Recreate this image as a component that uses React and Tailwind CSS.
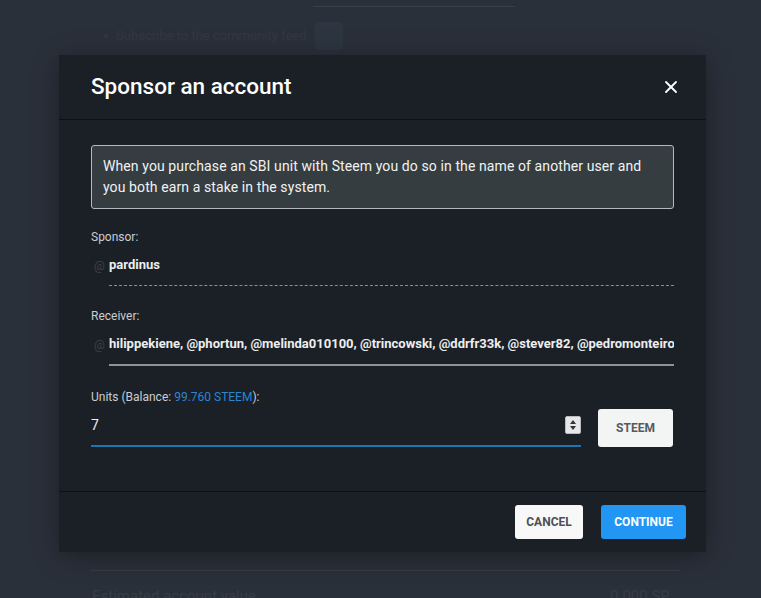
import { X } from "lucide-react";

function Field({ label, children }) {
    return (
        <div className="flex flex-col">
            <div className="text-[12px] leading-4 text-[#c9cdd1]">{label}</div>
            {children}
        </div>
    );
}

export default function App() {
    return (
        <div
            className="relative w-[761px] h-[598px] overflow-hidden bg-[#2a303a]"
            style={{ fontFamily: "Roboto, 'Liberation Sans', sans-serif" }}
        >
            {/* faint page content behind the overlay */}
            <div className="absolute left-[313px] top-[6px] w-[202px] h-px bg-[#37404a]" />
            <div className="absolute left-[104px] top-[22px] flex items-center gap-2 text-[13px] text-[#313842]">
                <span className="w-1 h-1 rounded-full bg-[#313842]" />
                <span>Subscribe to the community feed</span>
                <span className="w-7 h-7 rounded bg-[#2d3541]" />
            </div>
            <div className="absolute left-[90px] top-[570px] w-[590px] h-px bg-[#353c46]" />
            <div className="absolute left-[92px] top-[586px] text-[15px] leading-5 text-[#363d47]">Estimated account value</div>
            <div className="absolute left-[610px] top-[586px] text-[15px] leading-5 text-[#363d47]">0.000 SP</div>

            <div className="absolute left-[59px] top-[55px] w-[647px] bg-[#1b2027] shadow-[0_4px_24px_rgba(0,0,0,0.35)]">
                <div className="h-[65px] flex items-center justify-between pl-[32px] pr-[25px] border-b border-[#0e1114]">
                    <h2 className="text-[22.5px] font-medium text-white">Sponsor an account</h2>
                    <X size={20} strokeWidth={2.2} className="text-white" />
                </div>

                <div className="px-[32px] pt-[25px] pb-[44px] flex flex-col">
                    <div className="border border-[#b4b9bc] rounded-[3px] bg-[#353d41] px-[11px] py-[10px] text-[14px] leading-[21px] tracking-[0.1px] text-[#f1f2f2]">
                        When you purchase an SBI unit with Steem you do so in the name of another user and
                        <br />
                        you both earn a stake in the system.
                    </div>

                    <div className="mt-[20px]">
                        <Field label="Sponsor:">
                            <div className="flex items-center h-[41px]">
                                <span className="w-[18px] pl-[3px] text-[12px] text-[#3b4249]">@</span>
                                <div className="flex-1 h-full flex items-center border-b border-dashed border-[#8a8f94] text-[13px] font-bold text-[#eceeef]">
                                    pardinus
                                </div>
                            </div>
                        </Field>
                    </div>

                    <div className="mt-[22px]">
                        <Field label="Receiver:">
                            <div className="flex items-center h-[42px]">
                                <span className="w-[18px] pl-[3px] text-[12px] text-[#3b4249]">@</span>
                                <div className="flex-1 h-full flex items-center border-b-2 border-[#8e9399] text-[13px] font-bold text-[#eceeef] whitespace-nowrap overflow-hidden">
                                    hilippekiene, @phortun, @melinda010100, @trincowski, @ddrfr33k, @stever82, @pedromonteiro
                                </div>
                            </div>
                        </Field>
                    </div>

                    <div className="mt-[23px]">
                        <Field label={<>Units (Balance: <span className="text-[#2a86d1]">99.760 STEEM</span>):</>}>
                            <div className="flex items-center gap-[17px] h-[42px]">
                                <div className="w-[490px] h-full flex items-center justify-between border-b-2 border-[#1c77b0]">
                                    <span className="text-[14px] text-[#eceeef]">7</span>
                                    <div className="w-[16px] h-[18px] flex flex-col items-center justify-between py-[3px] bg-[#e6e7e8] border border-[#b9bcbf] rounded-[2px]">
                                        <span className="w-0 h-0 border-l-[3px] border-r-[3px] border-b-[4px] border-l-transparent border-r-transparent border-b-[#333]" />
                                        <span className="w-0 h-0 border-l-[3px] border-r-[3px] border-t-[4px] border-l-transparent border-r-transparent border-t-[#333]" />
                                    </div>
                                </div>
                                <button className="w-[75px] h-[38px] mt-[4px] rounded-[3px] bg-[#f3f4f4] text-[12px] font-bold text-[#555b60]">
                                    STEEM
                                </button>
                            </div>
                        </Field>
                    </div>
                </div>

                <div className="h-[61px] flex items-center justify-end gap-[18px] pr-[20px] pb-px border-t border-[#0e1114]">
                    <button className="w-[68px] h-[34px] rounded-[3px] bg-[#f8f8f8] text-[12px] font-bold text-[#4b5055]">
                        CANCEL
                    </button>
                    <button className="w-[85px] h-[34px] rounded-[3px] bg-[#2196f3] text-[12px] font-bold text-white">
                        CONTINUE
                    </button>
                </div>
            </div>
        </div>
    );
}
